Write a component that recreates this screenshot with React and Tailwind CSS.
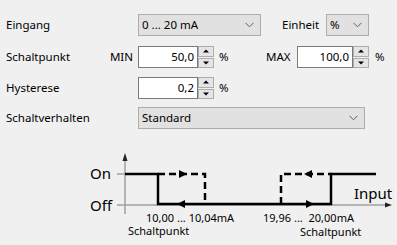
import React from "react";

const font = { fontFamily: '"Noto Sans", "Open Sans", sans-serif' };

function Chevron() {
  return (
    <svg width="9" height="6" viewBox="0 0 9 6" className="shrink-0">
      <path d="M0.5 0.8 L4.5 4.8 L8.5 0.8" fill="none" stroke="#606060" strokeWidth="1" />
    </svg>
  );
}

function Combo({ value, w }) {
  return (
    <div className={`${w} h-[22px] bg-[#e1e1e1] border border-[#adadad] flex items-center justify-between pl-[3px] pr-[6px] text-black`}>
      <span>{value}</span>
      <Chevron />
    </div>
  );
}

function Spin({ value, w }) {
  return (
    <div className={`${w} h-[22px] flex`}>
      <div className="flex-1 h-full bg-white border border-[#7a7a7a] flex items-center justify-end pr-[3px] text-black">
        {value}
      </div>
      <div className="w-[16px] h-full flex flex-col gap-[1px]">
        <div className="flex-1 bg-[#e5e5e5] border border-[#adadad] flex items-center justify-center">
          <svg width="6" height="4" viewBox="0 0 6 4"><path d="M0 3.5 L3 0.5 L6 3.5 Z" fill="#000" /></svg>
        </div>
        <div className="flex-1 bg-[#e5e5e5] border border-[#adadad] flex items-center justify-center">
          <svg width="6" height="4" viewBox="0 0 6 4"><path d="M0 0.5 L3 3.5 L6 0.5 Z" fill="#000" /></svg>
        </div>
      </div>
    </div>
  );
}

export default function App() {
  return (
    <div className="w-[397px] h-[245px] bg-[#f0f0f0] overflow-hidden text-[11.5px] text-black" style={font}>
      <div className="pt-[14px] flex flex-col">
        <div className="flex items-center h-[22px]">
          <span className="w-[138px] pl-[6px]">Eingang</span>
          <Combo value="0 ... 20 mA" w="w-[123px]" />
          <span className="ml-[21px] w-[44px]">Einheit</span>
          <Combo value="%" w="w-[43px]" />
        </div>
        <div className="flex items-center h-[22px] mt-[10px]">
          <div className="w-[138px] pl-[6px] pr-[5px] flex justify-between">
            <span>Schaltpunkt</span>
            <span>MIN</span>
          </div>
          <Spin value="50,0" w="w-[76px]" />
          <span className="w-[52px] pl-[5px]">%</span>
          <span className="w-[31px]">MAX</span>
          <Spin value="100,0" w="w-[72px]" />
          <span className="pl-[6px]">%</span>
        </div>
        <div className="flex items-center h-[22px] mt-[9px]">
          <span className="w-[138px] pl-[6px]">Hysterese</span>
          <Spin value="0,2" w="w-[76px]" />
          <span className="pl-[5px]">%</span>
        </div>
        <div className="flex items-center h-[22px] mt-[8px]">
          <span className="w-[138px] pl-[6px]">Schaltverhalten</span>
          <Combo value="Standard" w="w-[227px]" />
        </div>
        <svg width="397" height="115" viewBox="0 130 397 115" className="block mt-[1px]">
          <line x1="125" y1="159" x2="125" y2="214" stroke="#a0a0a0" strokeWidth="1.5" />
          <path d="M125 153 L122.5 161 L127.5 161 Z" fill="#222" />
          <line x1="117" y1="205" x2="386" y2="205" stroke="#a0a0a0" strokeWidth="1.5" />
          <path d="M392 205 L385 202.5 L385 207.5 Z" fill="#222" />
          <line x1="117" y1="174" x2="125" y2="174" stroke="#a0a0a0" strokeWidth="1.5" />
          <text x="90" y="179" fontSize="15" fill="#000">On</text>
          <text x="90" y="211" fontSize="15" fill="#000">Off</text>
          <text x="354" y="199" fontSize="15" fill="#000">Input</text>
          <path d="M125 174 H158 V204 H331 V174 H376" fill="none" stroke="#000" strokeWidth="2.5" />
          <path d="M158 174 H205 V204" fill="none" stroke="#000" strokeWidth="2.5" strokeDasharray="7 4" />
          <path d="M281 204 V174 H331" fill="none" stroke="#000" strokeWidth="2.5" strokeDasharray="7 4" />
          <path d="M187 174 L179 170 L179 178 Z" fill="#000" />
          <path d="M177 204 L185 200 L185 208 Z" fill="#000" />
          <path d="M304 174 L312 170 L312 178 Z" fill="#000" />
          <path d="M314 204 L306 200 L306 208 Z" fill="#000" />
          <text x="146" y="222" fontSize="11" fill="#000">10,00 ... 10,04mA</text>
          <text x="128" y="235" fontSize="11" fill="#000">Schaltpunkt</text>
          <text x="263" y="222" fontSize="11" fill="#000" xmlSpace="preserve">19,96 ...  20,00mA</text>
          <text x="300" y="236" fontSize="11" fill="#000">Schaltpunkt</text>
        </svg>
      </div>
    </div>
  );
}
